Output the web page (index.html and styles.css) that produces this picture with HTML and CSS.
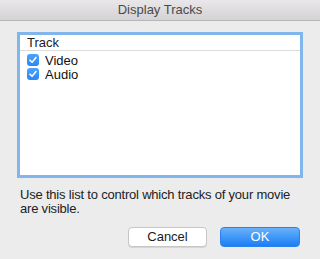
FILE: index.html
```html
<!DOCTYPE html>
<html lang="en">
<head>
  <meta charset="UTF-8">
  <title>Display Tracks</title>
  <link rel="stylesheet" href="styles.css">
</head>
<body>
  <div class="window">
    <div class="titlebar">Display Tracks</div>

    <div class="content">
      <div class="track-list">
        <div class="list-header">Track</div>
        <div class="list-row">
          <span class="checkbox">
            <svg width="12" height="12" viewBox="0 0 12 12"><path d="M3 6.2 L5.1 8.3 L9 3.6" fill="none" stroke="#fff" stroke-width="1.6" stroke-linecap="round" stroke-linejoin="round"/></svg>
          </span>
          <span class="row-label">Video</span>
        </div>
        <div class="list-row">
          <span class="checkbox">
            <svg width="12" height="12" viewBox="0 0 12 12"><path d="M3 6.2 L5.1 8.3 L9 3.6" fill="none" stroke="#fff" stroke-width="1.6" stroke-linecap="round" stroke-linejoin="round"/></svg>
          </span>
          <span class="row-label">Audio</span>
        </div>
      </div>

      <p class="hint">Use this list to control which tracks of your movie are visible.</p>

      <div class="buttons">
        <button class="btn btn-cancel">Cancel</button>
        <button class="btn btn-ok">OK</button>
      </div>
    </div>
  </div>
</body>
</html>
```

FILE: styles.css
```css
body {
  margin: 0;
  background-color: #ececec;
  font-family: 'Liberation Sans', Arial, sans-serif;
  font-size: 13px;
  color: #1a1a1a;
}
.window {
  width: 320px;
  height: 259px;
  overflow: hidden;
}
.titlebar {
  height: 20px;
  line-height: 20px;
  text-align: center;
  color: #4a4a4a;
  background: linear-gradient(#e9e7e9, #d4d2d4);
  border-bottom: 1px solid #b8b6b8;
}
.content {
  padding: 14px 20px 0 20px;
}
.track-list {
  width: 280px;
  height: 140px;
  background-color: #fff;
  box-shadow: 0 0 0 3px #80b6ec;
}
.list-header {
  height: 15px;
  line-height: 15px;
  padding-left: 7px;
  margin-bottom: 2px;
  color: #222;
  border-bottom: 1px solid #dcdcdc;
}
.list-row {
  display: flex;
  align-items: center;
  height: 14px;
  padding-left: 7px;
}
.checkbox {
  width: 12px;
  height: 12px;
  border-radius: 3px;
  background: linear-gradient(#4ca2fb, #2a87f6);
  display: flex;
}
.row-label {
  margin-left: 6px;
  color: #111;
}
.hint {
  margin: 13px 0 0 0;
  line-height: 14px;
  letter-spacing: -0.2px;
  color: #222;
}
.buttons {
  display: flex;
  justify-content: flex-end;
  gap: 13px;
  margin-top: 11px;
}
.btn {
  height: 20px;
  width: 80px;
  padding: 0;
  border-radius: 4px;
  font-family: inherit;
  font-size: 13px;
  line-height: 18px;
}
.btn-cancel {
  width: 79px;
  background-color: #fff;
  color: #1a1a1a;
  border: 1px solid #c6c6c6;
  box-shadow: 0 1px 0 #d6d6d6;
}
.btn-ok {
  color: #fff;
  border: 1px solid #2d80f0;
  background: linear-gradient(#69b1fa, #1a7ff5);
}
```
